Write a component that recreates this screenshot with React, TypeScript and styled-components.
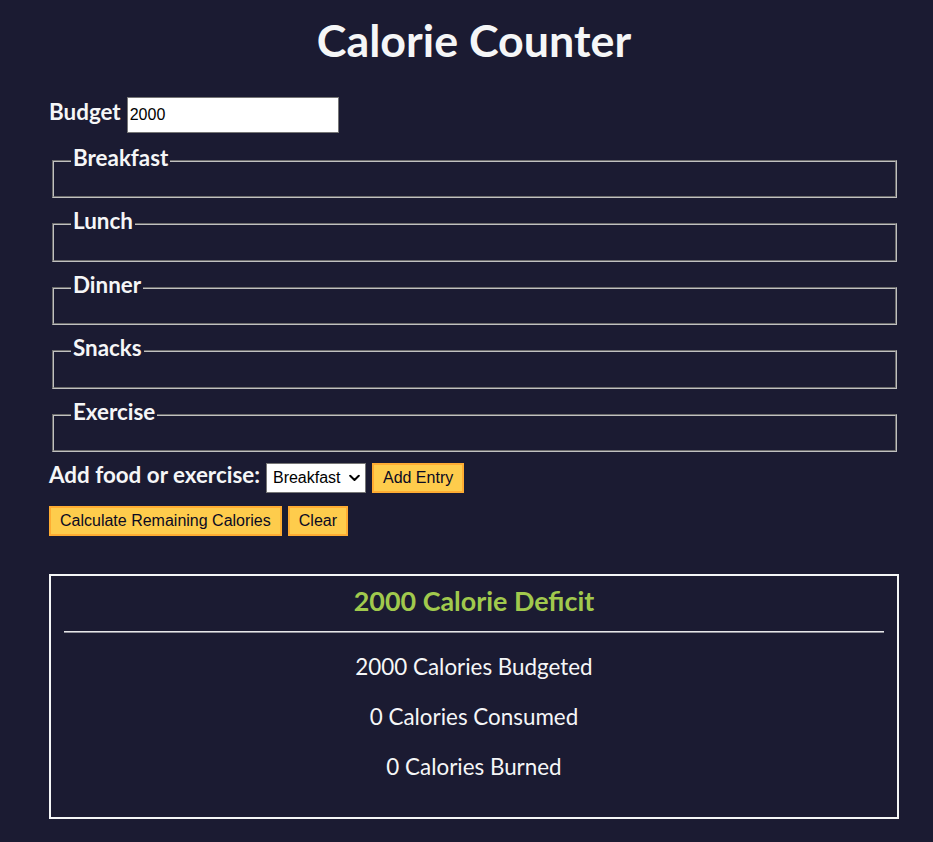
import React from "react";
import styled, { createGlobalStyle } from "styled-components";

const GlobalStyle = createGlobalStyle`
  html, body {
    margin: 0;
    padding: 0;
    background-color: #1b1b32;
  }
  body {
    color: #f5f6f7;
    font-family: Lato, "Liberation Sans", Arial, sans-serif;
    font-size: 22.4px;
    min-height: 842px;
  }
`;

const Page = styled.main`
  width: 850px;
  margin-left: 49px;
  padding-top: 13px;
  padding-bottom: 23px;
`;

const Title = styled.h1`
  margin: 0 0 30px;
  font-size: 44.8px;
  font-weight: 700;
  line-height: 54px;
  text-align: center;
`;

const Form = styled.form`
  display: flex;
  flex-direction: column;
`;

const Row = styled.div<{ $top?: number }>`
  display: flex;
  align-items: baseline;
  gap: 6px;
  margin-top: ${(p) => p.$top ?? 0}px;
`;

const FieldLabel = styled.label`
  font-size: 22.4px;
  font-weight: 700;
  line-height: 27px;
`;

const BudgetInput = styled.input`
  box-sizing: border-box;
  width: 212px;
  height: 36px;
  padding: 0 2px;
  border: 1px solid #767676;
  border-radius: 0;
  background: #ffffff;
  color: #000000;
  font-family: "Liberation Sans", Arial, sans-serif;
  font-size: 16px;
`;

const Sections = styled.div`
  display: flex;
  flex-direction: column;
  gap: 10px;
  margin-top: 11.5px;
`;

const Section = styled.fieldset`
  margin: 0 2px 0 3px;
  padding: 0 16px 19.5px 17px;
  border: 2px groove #c0c0c0;
  min-width: 0;
`;

const Legend = styled.legend`
  padding: 0 2px 6px;
  font-size: 22.4px;
  font-weight: 700;
  line-height: 26px;
`;

const SelectWrap = styled.span`
  position: relative;
  display: inline-flex;
`;

const Select = styled.select`
  box-sizing: border-box;
  width: 100px;
  height: 30px;
  padding: 0 20px 0 6px;
  border: 1px solid #767676;
  border-radius: 0;
  background: #ffffff;
  color: #000000;
  font-family: "Liberation Sans", Arial, sans-serif;
  font-size: 16px;
  appearance: none;
  -webkit-appearance: none;
`;

const Chevron = styled.svg`
  position: absolute;
  right: 6px;
  top: 50%;
  width: 11px;
  height: 7px;
  transform: translateY(-50%);
  pointer-events: none;
`;

const Button = styled.button`
  box-sizing: border-box;
  height: 30px;
  padding: 0 9px;
  border: 2px solid #feac32;
  background-color: #fecc4c;
  color: #0a0a23;
  font-family: "Liberation Sans", Arial, sans-serif;
  font-size: 16px;
  line-height: 18px;
  cursor: pointer;
`;

const Output = styled.div`
  margin-top: 38px;
  border: 2px solid #f5f6f7;
  padding: 10px 13px 14px;
  text-align: center;
`;

const Result = styled.span<{ $tone: "deficit" | "surplus" }>`
  display: block;
  font-size: 26.88px;
  font-weight: 700;
  line-height: 30px;
  color: ${(p) => (p.$tone === "deficit" ? "#a1c94d" : "#ffadad")};
`;

const Divider = styled.hr`
  margin: 15px 0 0;
  height: 0;
  border: 0;
  border-top: 1px solid #e6e6e8;
  border-bottom: 1px solid #8f8f99;
`;

const StatList = styled.div`
  display: flex;
  flex-direction: column;
  gap: 20px;
  padding: 19px 0 21px;
`;

const Stat = styled.p`
  margin: 0;
  font-size: 22.4px;
  line-height: 30px;
`;

const meals = ["Breakfast", "Lunch", "Dinner", "Snacks", "Exercise"];

export default function App() {
  return (
    <>
      <GlobalStyle />
      <Page>
        <Title>Calorie Counter</Title>
        <Form onSubmit={(e) => e.preventDefault()}>
          <Row>
            <FieldLabel htmlFor="budget">Budget</FieldLabel>
            <BudgetInput id="budget" type="number" defaultValue="2000" />
          </Row>
          <Sections>
            {meals.map((m) => (
              <Section key={m}>
                <Legend>{m}</Legend>
              </Section>
            ))}
          </Sections>
          <Row $top={9}>
            <FieldLabel htmlFor="entry-dropdown">Add food or exercise:</FieldLabel>
            <SelectWrap>
              <Select id="entry-dropdown" defaultValue="breakfast">
                <option value="breakfast">Breakfast</option>
                <option value="lunch">Lunch</option>
                <option value="dinner">Dinner</option>
                <option value="snacks">Snacks</option>
                <option value="exercise">Exercise</option>
              </Select>
              <Chevron viewBox="0 0 11 7" aria-hidden="true">
                <polyline
                  points="1.2,1.2 5.5,5.5 9.8,1.2"
                  fill="none"
                  stroke="#000"
                  strokeWidth="2"
                  strokeLinecap="round"
                  strokeLinejoin="round"
                />
              </Chevron>
            </SelectWrap>
            <Button type="button">Add Entry</Button>
          </Row>
          <Row $top={13}>
            <Button type="submit">Calculate Remaining Calories</Button>
            <Button type="button">Clear</Button>
          </Row>
        </Form>
        <Output>
          <Result $tone="deficit">2000 Calorie Deficit</Result>
          <Divider />
          <StatList>
            <Stat>2000 Calories Budgeted</Stat>
            <Stat>0 Calories Consumed</Stat>
            <Stat>0 Calories Burned</Stat>
          </StatList>
        </Output>
      </Page>
    </>
  );
}
